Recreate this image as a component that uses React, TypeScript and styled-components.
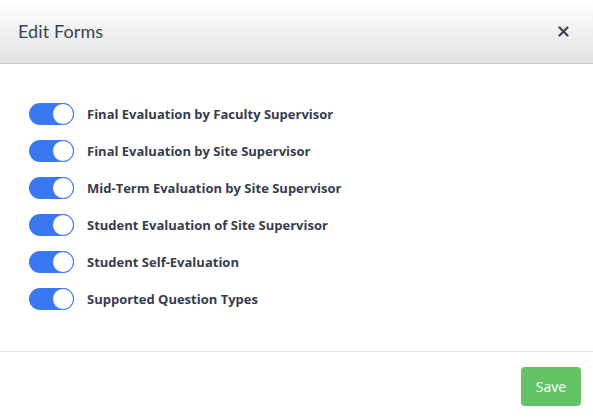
import React, { useState } from "react";
import styled, { createGlobalStyle } from "styled-components";

const Global = createGlobalStyle`
  html, body { margin: 0; padding: 0; background: #fff; }
  body { font-family: "Lato", "Noto Sans", sans-serif; }
  * { box-sizing: border-box; }
`;

const Modal = styled.div`
  width: 593px;
  height: 420px;
  display: flex;
  flex-direction: column;
  background: #fff;
`;

const Header = styled.div`
  height: 64px;
  flex: none;
  display: flex;
  align-items: center;
  justify-content: space-between;
  padding: 0 20px 0 18px;
  background: linear-gradient(to bottom, #ffffff 0%, #e3e3e3 100%);
  border-bottom: 1px solid #c9c9c9;
`;

const Title = styled.h1`
  margin: 0;
  font-family: "Lato", "Noto Sans", sans-serif;
  font-weight: 400;
  font-size: 18px;
  color: #3b4252;
  letter-spacing: 0.1px;
  padding-bottom: 1px;
`;

const Close = styled.button`
  border: none;
  background: transparent;
  padding: 0;
  width: 20px;
  height: 20px;
  display: flex;
  align-items: center;
  justify-content: center;
  cursor: pointer;
`;

const Body = styled.div`
  flex: 1;
  display: flex;
  flex-direction: column;
  gap: 15px;
  padding: 39px 29px 0;
`;

const Row = styled.label`
  display: flex;
  align-items: center;
  gap: 13px;
  height: 22px;
  cursor: pointer;
`;

const Track = styled.span<{ $on: boolean }>`
  position: relative;
  width: 45px;
  height: 22px;
  border-radius: 11px;
  background: ${(p) => (p.$on ? "#3a78f2" : "#d0d4db")};
  flex: none;
`;

const Knob = styled.span<{ $on: boolean }>`
  position: absolute;
  top: 0;
  left: ${(p) => (p.$on ? "23px" : "0")};
  width: 22px;
  height: 22px;
  border-radius: 50%;
  background: #fff;
  border: 1.5px solid ${(p) => (p.$on ? "#3a78f2" : "#d0d4db")};
`;

const Label = styled.span`
  font-family: "Open Sans", "Noto Sans", sans-serif;
  font-weight: 700;
  font-size: 13px;
  color: #363c4d;
  padding-bottom: 1px;
`;

const Footer = styled.div`
  height: 69px;
  flex: none;
  border-top: 1px solid #e2e2e2;
  display: flex;
  align-items: flex-start;
  justify-content: flex-end;
  padding: 15px 12px 0 0;
`;

const SaveButton = styled.button`
  width: 60px;
  height: 39px;
  border: none;
  border-radius: 4px;
  background: #62c466;
  color: #fff;
  font-family: "Open Sans", "Noto Sans", sans-serif;
  font-size: 14px;
  cursor: pointer;
`;

const forms = [
  "Final Evaluation by Faculty Supervisor",
  "Final Evaluation by Site Supervisor",
  "Mid-Term Evaluation by Site Supervisor",
  "Student Evaluation of Site Supervisor",
  "Student Self-Evaluation",
  "Supported Question Types",
];

export default function App() {
  const [on, setOn] = useState<boolean[]>(forms.map(() => true));
  return (
    <>
      <Global />
      <Modal>
        <Header>
          <Title>Edit Forms</Title>
          <Close aria-label="Close">
            <svg width="11" height="11" viewBox="0 0 11 11">
              <path d="M1.5 1.5 L9.5 9.5 M9.5 1.5 L1.5 9.5" stroke="#3b4252" strokeWidth="2.2" strokeLinecap="round" />
            </svg>
          </Close>
        </Header>
        <Body>
          {forms.map((f, i) => (
            <Row key={f} onClick={() => setOn((s) => s.map((v, j) => (j === i ? !v : v)))}>
              <Track $on={on[i]}>
                <Knob $on={on[i]} />
              </Track>
              <Label>{f}</Label>
            </Row>
          ))}
        </Body>
        <Footer>
          <SaveButton>Save</SaveButton>
        </Footer>
      </Modal>
    </>
  );
}
